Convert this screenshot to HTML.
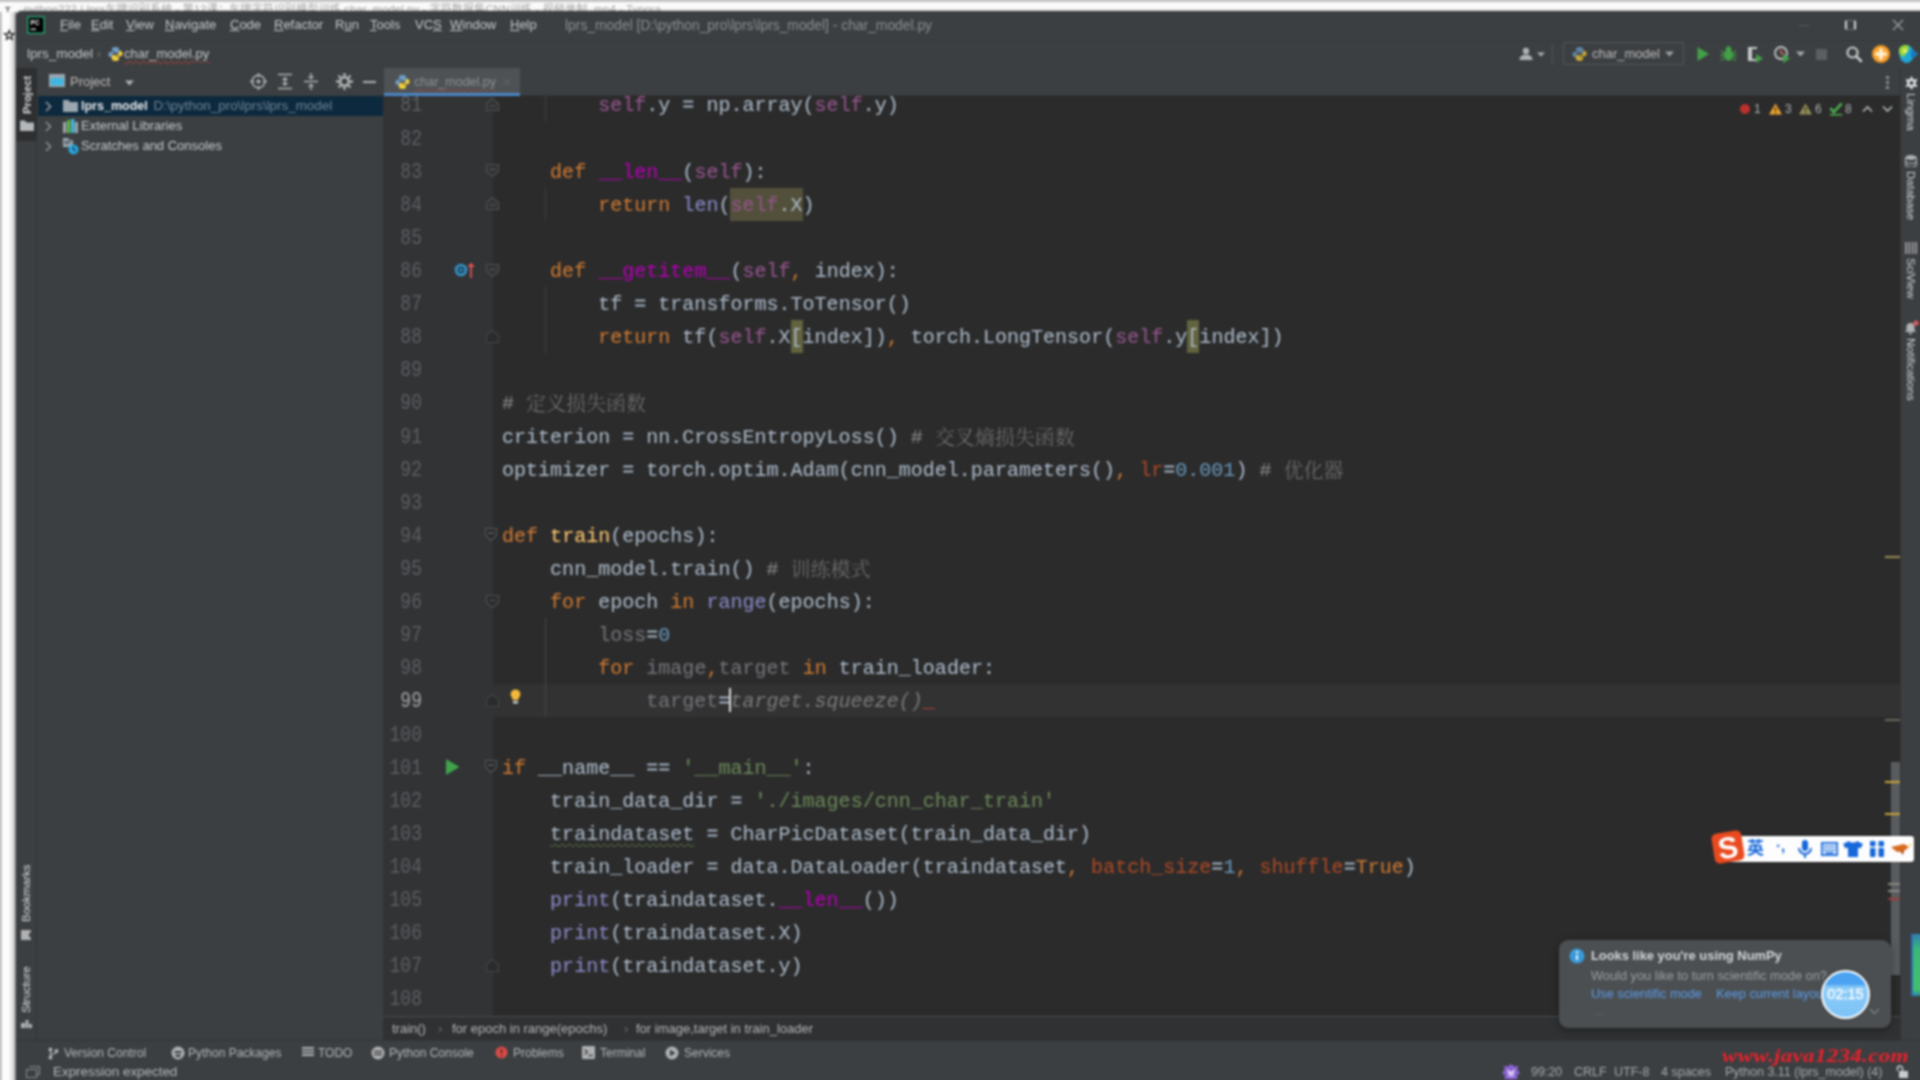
<!DOCTYPE html>
<html lang="en">
<head>
<meta charset="utf-8">
<title>lprs_model - char_model.py</title>
<style>
*{box-sizing:border-box;margin:0;padding:0}
html,body{width:1920px;height:1080px;overflow:hidden}
body{position:relative;background:#f4f4f4;font-family:"Liberation Sans","Noto Sans CJK SC",sans-serif;font-size:13px;color:#bbbbbb}
.abs{position:absolute}
#bgtop{left:0;top:0;width:1920px;height:12px;background:#fafafa;color:#777;font-size:11px;line-height:12px;white-space:nowrap}
#bgtop span{position:absolute;top:2.500px;color:#8a8a8a}
#bgleft{left:0;top:12px;width:17px;height:1092px;background:linear-gradient(90deg,#c4c4c4 0,#c4c4c4 1.500px,#ffffff 2px,#fbfbfb 9px,#d4d4d4 14px,#808284 17px)}
#ide{left:16px;top:11px;width:1928px;height:1093px;background:#3c3f41;border-radius:6px 6px 0 0;overflow:hidden;box-shadow:0 0 3px rgba(0,0,0,.5)}
/* bars */
#menubar{left:0;top:0;width:1904px;height:29px;background:#3c3f41}
#menubar .mi{position:absolute;top:6px;line-height:16px;font-size:13px;color:#c6c8ca;white-space:nowrap}
#menubar .mi u{text-decoration:underline;text-underline-offset:1px}
#navbar{left:0;top:29px;width:1904px;height:28px;background:#3c3f41;border-top:1px solid #373a3c}
#lstripe{left:0;top:57px;width:21px;height:972px;background:#3c3f41;border-right:1px solid #323537}
#rstripe{left:1884px;top:57px;width:20px;height:972px;background:#3c3f41;border-left:1px solid #323537}
#proj{left:21px;top:57px;width:346px;height:972px;background:#3c3f41}
#editor{left:367px;top:57px;width:1517px;height:972px;background:#2b2b2b}
#bottomtools{left:0;top:1029px;width:1904px;height:23px;background:#3c3f41;border-top:1px solid #323537}
#status{left:0;top:1052px;width:1904px;height:17px;background:#3c3f41}

#editor .ln{position:absolute;left:0;width:39px;height:33px;line-height:33px;text-align:right;font-family:"Liberation Mono","DejaVu Sans Mono",monospace;font-size:20px;letter-spacing:.02px;color:#5c5f62;white-space:pre;transform:scale(.9,1.08);transform-origin:100% 50%}
#editor .ln.cur{color:#a4a3a3}
#editor .cl{position:absolute;height:33px;line-height:33px;font-family:"Liberation Mono","Noto Serif CJK SC","DejaVu Sans Mono",monospace;font-size:20px;letter-spacing:.02px;color:#a9b7c6;white-space:pre;-webkit-text-stroke:.1px currentColor}
.k{color:#cc7832}.sf{color:#94558d}.dm{color:#b200b2}.bi{color:#8888c6}.s{color:#6a8759}.n{color:#6897bb}.na{color:#aa4926}.c{color:#808080}.fn{color:#ffc66d}.un{color:#72737a}
.cj{font-family:"Noto Serif CJK SC","Noto Sans CJK SC",serif;font-size:20px;letter-spacing:0;line-height:20px;font-weight:300;color:#757575;-webkit-text-stroke:0;position:relative;top:2px}
.hl{background:#52503a;padding:6px 0 4px}
.hb{background:#62633f;padding:6px 0 4px}
.sg{color:#787878;font-style:italic}
.er{color:#bc3f3c}
.wk{text-decoration:underline wavy #5e7a4a 1px;text-underline-offset:3px}
.caret{display:inline-block;width:2px;height:24px;background:#dddddd;vertical-align:-5px;margin:0 -1px}
.insp{position:absolute;top:33px;font-size:12px;line-height:16px;color:#b0b2b4}
#tabs{left:0;top:0;width:1517px;height:28px;background:#3c3f41;border-bottom:1px solid #323232}
#crumbs{left:0;top:948px;width:1517px;height:24px;background:#2f3133;border-top:1px solid #4a4c4e;font-size:13px;color:#b4b6b8}
#crumbs span{position:absolute;top:4px;line-height:15px;white-space:nowrap}

#bottomtools span{position:absolute;top:4px;font-size:12px;line-height:16px;color:#b4b6b8;white-space:nowrap}
#bottomtools svg{position:absolute}
#status span{position:absolute;top:1px;font-size:12.500px;line-height:16px;color:#a8aaac;white-space:nowrap}
#rstripe span{position:absolute;left:18px;transform:rotate(90deg);transform-origin:0 0;font-size:11.500px;line-height:16px;color:#d2d4d6;white-space:nowrap}

#notif{left:1559px;top:940px;width:332px;height:88px;background:#4b4f51;border-radius:9px;box-shadow:0 2px 8px rgba(0,0,0,.35)}
#notif span{position:absolute;white-space:nowrap;line-height:16px}
#sogou{left:1716px;top:836px;width:198px;height:26px;background:#fdfdfd;border-radius:3px;box-shadow:0 0 2px rgba(0,0,0,.5)}
#wm{left:1722px;top:1041px;font-family:"Liberation Serif","DejaVu Serif",serif;font-weight:700;font-style:italic;font-size:23px;line-height:30px;color:#e8212b;letter-spacing:.3px;white-space:nowrap;transform:scaleY(.82);transform-origin:0 50%}

#blur{position:absolute;left:-24px;top:-24px;width:1968px;height:1128px;background:#fafafa;filter:blur(1px)}
#stage{position:absolute;left:24px;top:24px;width:1920px;height:1080px}
</style>
</head>
<body>
<div id="blur"><div id="stage">
<div id="bgtop" class="abs"><div class="abs" style="left:-24px;top:-24px;width:1968px;height:26px;background:#c4c4c4"></div><span style="left:24px;letter-spacing:.2px;color:#a8a8a8">python222 | lprs车牌识别系统 - 第12课：车牌字符识别模型训练 char_model.py - 字符数据集CNN训练 - 视频录制 .mp4 - Typora</span><span style="left:5px;top:4px;color:#5a5a5a;font-size:9px;font-weight:700">T</span></div>
<div id="bgleft" class="abs"><div class="abs" style="left:-24px;top:0;width:25.500px;height:1092px;background:#c4c4c4"></div><span class="abs" style="left:3px;top:15px;font-family:'DejaVu Sans',sans-serif;font-size:14px;font-weight:700;line-height:16px;color:#000;-webkit-text-stroke:.6px #000">&#9734;</span></div>
<div id="ide" class="abs">
  <div id="menubar" class="abs">
    <svg class="abs" style="left:11px;top:5px" width="18" height="18" viewBox="0 0 18 18"><rect x="0" y="0" width="18" height="18" rx="1" fill="#279a6c"/><rect x="1.600" y="1.600" width="14.800" height="14.800" fill="#000"/><text x="3.4" y="9" font-family="Liberation Sans,sans-serif" font-size="6.5" font-weight="700" fill="#fff">PC</text><rect x="3.6" y="12.6" width="5.4" height="1.2" fill="#fff"/></svg>
    <span class="mi" style="left:44px"><u>F</u>ile</span>
    <span class="mi" style="left:75px"><u>E</u>dit</span>
    <span class="mi" style="left:110px"><u>V</u>iew</span>
    <span class="mi" style="left:149px"><u>N</u>avigate</span>
    <span class="mi" style="left:214px"><u>C</u>ode</span>
    <span class="mi" style="left:258px"><u>R</u>efactor</span>
    <span class="mi" style="left:319px">R<u>u</u>n</span>
    <span class="mi" style="left:354px"><u>T</u>ools</span>
    <span class="mi" style="left:399px">VC<u>S</u></span>
    <span class="mi" style="left:434px"><u>W</u>indow</span>
    <span class="mi" style="left:494px"><u>H</u>elp</span>
    <span class="mi" style="left:549px;color:#8c8f91;font-size:13.85px">lprs_model [D:\python_pro\lprs\lprs_model] - char_model.py</span>
    <div class="abs" style="left:1783px;top:14px;width:10px;height:1px;background:#55585a"></div>
    <div class="abs" style="left:1829px;top:9px;width:11px;height:10px;border:2px solid #d4d6d8;border-top-width:0;border-bottom-width:0"></div>
    <div class="abs" style="left:1829px;top:9px;width:11px;height:10px;border:1px solid #6d7072;border-left:0;border-right:0"></div>
    <svg class="abs" style="left:1876px;top:8px" width="12" height="12" viewBox="0 0 12 12"><path d="M1 1L11 11M11 1L1 11" stroke="#9a9da0" stroke-width="1.4" fill="none"/></svg>
  </div>
  <div id="navbar" class="abs">
    <span class="abs" style="left:11px;top:5px;font-size:13.5px;line-height:16px;color:#c4c6c8">lprs_model</span>
    <span class="abs" style="left:81px;top:5px;font-size:12px;line-height:16px;color:#6f7274">&#8250;</span>
    <svg class="abs pyi" style="left:92px;top:5px" width="15" height="16" viewBox="0 0 15 16"><path d="M7 1C4.6 1 4 2 4 3.2V5h3.5v.8H2.4C1.2 5.800 .5 6.800 .5 8.500S1.200 11 2.400 11H4V9.200C4 8 5 7 6.200 7H9.800C10.700 7 11.200 6.400 11.200 5.500V3.200C11.200 1.900 10 1 7 1Z" fill="#6f9fc9"/><path d="M8 15c2.400 0 3-1 3-2.200V11H7.500v-.8h5.100c1.200 0 1.900-1 1.900-2.700S13.800 5 12.600 5H11v1.800C11 8 10 9 8.800 9H5.200C4.300 9 3.800 9.600 3.800 10.500v2.300C3.800 14.100 5 15 8 15Z" fill="#f2d13c"/></svg>
    <span class="abs" style="left:108px;top:5px;font-size:13px;line-height:16px;color:#c4c6c8;text-decoration:underline wavy #bc3f3c 1px;text-underline-offset:2px">char_model.py</span>
    <!-- right toolbar -->
    <svg class="abs" style="left:1502px;top:5px" width="32" height="16" viewBox="0 0 32 16"><circle cx="8" cy="5" r="3.200" fill="#afb1b3"/><path d="M1.500 14c0-3.600 2.600-5.200 6.500-5.200s6.500 1.600 6.500 5.200z" fill="#afb1b3"/><path d="M19 6.500h8l-4 4z" fill="#afb1b3"/></svg>
    <div class="abs" style="left:1536px;top:3px;width:1px;height:21px;background:#515456"></div>
    <div class="abs" style="left:1547px;top:1px;width:121px;height:23px;border:1px solid #55585a;border-radius:2px"></div>
    <svg class="abs" style="left:1556px;top:5px" width="15" height="16" viewBox="0 0 15 16"><path d="M7 1C4.6 1 4 2 4 3.2V5h3.5v.8H2.4C1.2 5.800 .5 6.800 .5 8.500S1.200 11 2.400 11H4V9.200C4 8 5 7 6.200 7H9.800C10.700 7 11.200 6.400 11.200 5.500V3.200C11.200 1.900 10 1 7 1Z" fill="#5f86a8"/><path d="M8 15c2.400 0 3-1 3-2.200V11H7.500v-.8h5.100c1.200 0 1.900-1 1.900-2.700S13.800 5 12.600 5H11v1.800C11 8 10 9 8.800 9H5.200C4.300 9 3.800 9.600 3.800 10.500v2.300C3.800 14.100 5 15 8 15Z" fill="#c9a936"/></svg>
    <span class="abs" style="left:1576px;top:5px;font-size:13px;line-height:16px;color:#bbbbbb">char_model</span>
    <svg class="abs" style="left:1649px;top:10px" width="9" height="6" viewBox="0 0 9 6"><path d="M0 .5h9L4.500 5.500z" fill="#9da0a2"/></svg>
    <svg class="abs" style="left:1680px;top:5px" width="14" height="16" viewBox="0 0 14 16"><path d="M1.500 1L13 8 1.500 15z" fill="#43a047"/></svg>
    <svg class="abs" style="left:1704px;top:4px" width="17" height="18" viewBox="0 0 17 18"><ellipse cx="8.500" cy="10" rx="4.600" ry="5.800" fill="#43a047"/><circle cx="8.500" cy="4" r="2.800" fill="#43a047"/><path d="M1 6l3 2M16 6l-3 2M.5 10.500H4M16.500 10.500H13M1 15.500l3-2M16 15.500l-3-2" stroke="#43a047" stroke-width="1.500" fill="none"/></svg>
    <svg class="abs" style="left:1730px;top:4px" width="18" height="18" viewBox="0 0 18 18"><path d="M2 2h9v14H2z" fill="#c7c9cb"/><path d="M5 4h6v10H5z" fill="#3c3f41"/><path d="M2 2h4v14H2z" fill="#c7c9cb"/><path d="M10 9l7 4.500L10 18z" fill="#43a047"/></svg>
    <svg class="abs" style="left:1757px;top:4px" width="18" height="18" viewBox="0 0 18 18"><circle cx="8" cy="8" r="6" fill="none" stroke="#c0c2c4" stroke-width="1.800"/><path d="M8 4.500V8l3 1.500" stroke="#d0605c" stroke-width="1.500" fill="none"/><path d="M10 9l7 4.500L10 18z" fill="#43a047"/></svg>
    <svg class="abs" style="left:1780px;top:10px" width="9" height="6" viewBox="0 0 9 6"><path d="M0 .5h9L4.500 5.500z" fill="#a6a8aa"/></svg>
    <div class="abs" style="left:1800px;top:8px;width:11px;height:11px;background:#5c5f61"></div>
    <svg class="abs" style="left:1829px;top:4px" width="18" height="18" viewBox="0 0 18 18"><circle cx="7.500" cy="7.500" r="5" fill="none" stroke="#c9cbcd" stroke-width="2.200"/><path d="M11.300 11.300L16 16" stroke="#c9cbcd" stroke-width="2.600" stroke-linecap="round"/></svg>
    <svg class="abs" style="left:1855px;top:3px" width="20" height="20" viewBox="0 0 20 20"><circle cx="10" cy="10" r="9" fill="#f59a23"/><circle cx="10" cy="10" r="6.500" fill="#f7ae45"/><path d="M10 5.500v9M5.500 10h9" stroke="#fff4dc" stroke-width="3" stroke-linecap="round"/></svg>
    <svg class="abs" style="left:1881px;top:3px" width="22" height="20" viewBox="0 0 22 20"><path d="M2 7c0-4 3.500-6 7-6s6 2 7 5l5 4-5 4c-1 3-4 5-7 5-4-1-7-4-7-12z" fill="#1ea6d8"/><path d="M2 7c0-4 3.500-6 7-6 2 0 3 1 3 3 0 4-4 5-5 9-3-1-5-3-5-6z" fill="#9ad535"/><path d="M14 6l7 4-7 4z" fill="#1775c9"/><circle cx="8" cy="7" r="2.200" fill="#e4f26a"/></svg>
  </div>
  <div id="lstripe" class="abs">
    <div class="abs" style="left:0;top:0;width:21px;height:73px;background:#2d2f30"></div>
    <span class="abs vtxt" style="left:2.500px;top:46px;transform:rotate(-90deg);transform-origin:0 0;width:40px;font-size:11.300px;line-height:16px;color:#d5d7d9;font-weight:700;white-space:nowrap">Project</span>
    <svg class="abs" style="left:4px;top:51px" width="14" height="12" viewBox="0 0 14 12"><path d="M0 1.500h5l1.500 2H14V12H0z" fill="#b4b8bb"/></svg>
    <span class="abs vtxt" style="left:2px;top:854px;transform:rotate(-90deg);transform-origin:0 0;width:70px;font-size:11.500px;line-height:16px;color:#dcdee0;white-space:nowrap">Bookmarks</span>
    <svg class="abs" style="left:5px;top:861px" width="10" height="12" viewBox="0 0 10 12"><path d="M0 0h10v12L5 8.500 0 12z" fill="#afb1b3" transform="rotate(-90 5 6)"/></svg>
    <span class="abs vtxt" style="left:2px;top:945px;transform:rotate(-90deg);transform-origin:0 0;width:60px;font-size:11.500px;line-height:16px;color:#dcdee0;white-space:nowrap">Structure</span>
    <svg class="abs" style="left:5px;top:949px" width="11" height="11" viewBox="0 0 11 11"><path d="M0 6h4v5H0zM4.500 3h3v8h-3zM8 7h3v4H8z" fill="#afb1b3"/></svg>
  </div>
  <div id="proj" class="abs">
    <!-- header -->
    <svg class="abs" style="left:12px;top:6px" width="16" height="15" viewBox="0 0 16 15"><rect x="0" y="0" width="16" height="13" fill="#9aa7b0"/><rect x="1.500" y="4" width="13" height="7.500" fill="#40b6e0"/><rect x="0" y="13" width="16" height="2" fill="#3c3f41"/></svg>
    <span class="abs" style="left:33px;top:6px;font-size:13px;line-height:16px;color:#bbbbbb">Project</span>
    <svg class="abs" style="left:88px;top:12px" width="9" height="6" viewBox="0 0 9 6"><path d="M0 .5h9L4.500 5.500z" fill="#afb1b3"/></svg>
    <svg class="abs" style="left:213px;top:5px" width="17" height="17" viewBox="0 0 17 17"><circle cx="8.500" cy="8.500" r="6.300" fill="none" stroke="#afb1b3" stroke-width="1.600"/><circle cx="8.500" cy="8.500" r="2" fill="#afb1b3"/><path d="M8.500 0v4M8.500 13v4M0 8.500h4M13 8.500h4" stroke="#afb1b3" stroke-width="1.600"/></svg>
    <svg class="abs" style="left:240px;top:5px" width="16" height="17" viewBox="0 0 16 17"><path d="M1 1.500h14M1 15.500h14" stroke="#afb1b3" stroke-width="1.700"/><path d="M8 4l3.500 3h-7zM8 13l3.500-3h-7z" fill="#afb1b3"/><path d="M8 6v5" stroke="#afb1b3" stroke-width="1.500"/></svg>
    <svg class="abs" style="left:266px;top:5px" width="16" height="17" viewBox="0 0 16 17"><path d="M1 8.500h14" stroke="#afb1b3" stroke-width="1.700"/><path d="M8 6.500l3.500-3h-7zM8 10.500l3.500 3h-7z" fill="#afb1b3"/><path d="M8 0v4M8 13v4" stroke="#afb1b3" stroke-width="1.500"/></svg>
    <svg class="abs" style="left:299px;top:5px" width="17" height="17" viewBox="0 0 17 17"><circle cx="8.500" cy="8.500" r="4.200" fill="none" stroke="#afb1b3" stroke-width="2.600"/><path d="M8.500 0v3.500M8.500 13.500V17M0 8.500h3.500M13.500 8.500H17M2.500 2.500l2.500 2.500M12 12l2.500 2.500M14.500 2.500L12 5M5 12l-2.500 2.500" stroke="#afb1b3" stroke-width="2.300"/></svg>
    <div class="abs" style="left:326px;top:13px;width:13px;height:2px;background:#afb1b3"></div>
    <!-- tree -->
    <div class="abs" style="left:1px;top:28px;width:345px;height:20px;background:#0d293e"></div>
    <svg class="abs chev" style="left:8px;top:33px" width="7" height="11" viewBox="0 0 7 11"><path d="M1 1l4.500 4.500L1 10" stroke="#9da0a2" stroke-width="1.500" fill="none"/></svg>
    <svg class="abs" style="left:26px;top:32px" width="15" height="12" viewBox="0 0 15 12"><path d="M0 0h5.500l1.500 2H15v10H0z" fill="#9aa7b0"/></svg>
    <span class="abs" style="left:44px;top:30px;font-size:12.500px;line-height:16px;color:#e8eaec;font-weight:700;white-space:nowrap">lprs_model</span>
    <span class="abs" style="left:116.500px;top:30px;font-size:13.400px;line-height:16px;color:#6f8496;white-space:nowrap">D:\python_pro\lprs\lprs_model</span>
    <svg class="abs chev" style="left:8px;top:53px" width="7" height="11" viewBox="0 0 7 11"><path d="M1 1l4.500 4.500L1 10" stroke="#8f9294" stroke-width="1.500" fill="none"/></svg>
    <svg class="abs" style="left:26px;top:51px" width="15" height="14" viewBox="0 0 15 14"><rect x="0" y="3" width="3.300" height="11" fill="#9aa7b0"/><rect x="4" y="1" width="3.300" height="13" fill="#62b543"/><rect x="8" y="0" width="3.300" height="14" fill="#40b6e0"/><rect x="11.700" y="3" width="3.300" height="11" fill="#9aa7b0"/></svg>
    <span class="abs" style="left:44px;top:50px;font-size:13px;line-height:16px;color:#c8cacc;white-space:nowrap">External Libraries</span>
    <svg class="abs chev" style="left:8px;top:73px" width="7" height="11" viewBox="0 0 7 11"><path d="M1 1l4.500 4.500L1 10" stroke="#8f9294" stroke-width="1.500" fill="none"/></svg>
    <svg class="abs" style="left:26px;top:70px" width="17" height="17" viewBox="0 0 17 17"><path d="M0 0h5l1.500 2H10V9H0z" fill="#9aa7b0"/><path d="M1.500 3.500h7M1.500 5.500h5" stroke="#3c3f41" stroke-width="1"/><circle cx="10.500" cy="11.500" r="5" fill="#27a6dc"/><path d="M10.500 8.500v3l2.200 1.600" stroke="#203040" stroke-width="1.200" fill="none"/></svg>
    <span class="abs" style="left:44px;top:70px;font-size:13px;line-height:16px;color:#c8cacc;white-space:nowrap">Scratches and Consoles</span>
  </div>
  <div id="editor" class="abs">
    <div class="abs" style="left:0;top:0;width:110px;height:948px;background:#313335"></div>
    <div class="abs" style="left:110px;top:616.4px;width:1407px;height:33px;background:#323232"></div>
    <div class="abs" style="left:162.1px;top:20.4px;width:1px;height:33.1px;background:#3e4042"></div>
    <div class="abs" style="left:162.1px;top:119.8px;width:1px;height:33.1px;background:#3e4042"></div>
    <div class="abs" style="left:162.1px;top:219.1px;width:1px;height:66.2px;background:#3e4042"></div>
    <div class="abs" style="left:162.1px;top:550.2px;width:1px;height:99.3px;background:#454749"></div>
    <div class="ln" style="top:21.4px">81</div>
    <div class="cl" style="left:215.2px;top:21.4px"><span class="sf">self</span>.y = np.array(<span class="sf">self</span>.y)</div>
    <div class="ln" style="top:54.6px">82</div>
    <div class="ln" style="top:87.7px">83</div>
    <div class="cl" style="left:167.1px;top:87.7px"><span class="k">def</span> <span class="dm">__len__</span>(<span class="sf">self</span>):</div>
    <div class="ln" style="top:120.8px">84</div>
    <div class="cl" style="left:215.2px;top:120.8px"><span class="k">return</span> <span class="bi">len</span>(<span class="hl"><span class="sf">self</span>.X</span>)</div>
    <div class="ln" style="top:153.9px">85</div>
    <div class="ln" style="top:187.0px">86</div>
    <div class="cl" style="left:167.1px;top:187.0px"><span class="k">def</span> <span class="dm">__getitem__</span>(<span class="sf">self</span><span class="k">,</span> index):</div>
    <div class="ln" style="top:220.1px">87</div>
    <div class="cl" style="left:215.2px;top:220.1px">tf = transforms.ToTensor()</div>
    <div class="ln" style="top:253.2px">88</div>
    <div class="cl" style="left:215.2px;top:253.2px"><span class="k">return</span> tf(<span class="sf">self</span>.X<span class="hb">[</span>index])<span class="k">,</span> torch.LongTensor(<span class="sf">self</span>.y<span class="hb">[</span>index])</div>
    <div class="ln" style="top:286.3px">89</div>
    <div class="ln" style="top:319.4px">90</div>
    <div class="cl" style="left:119.0px;top:319.4px"><span class="c"># <span class="cj">定义损失函数</span></span></div>
    <div class="ln" style="top:352.5px">91</div>
    <div class="cl" style="left:119.0px;top:352.5px">criterion = nn.CrossEntropyLoss() <span class="c"># <span class="cj">交叉熵损失函数</span></span></div>
    <div class="ln" style="top:385.7px">92</div>
    <div class="cl" style="left:119.0px;top:385.7px">optimizer = torch.optim.Adam(cnn_model.parameters()<span class="k">,</span> <span class="na">lr</span>=<span class="n">0.001</span>) <span class="c"># <span class="cj">优化器</span></span></div>
    <div class="ln" style="top:418.8px">93</div>
    <div class="ln" style="top:451.9px">94</div>
    <div class="cl" style="left:119.0px;top:451.9px"><span class="k">def</span> <span class="fn">train</span>(epochs):</div>
    <div class="ln" style="top:485.0px">95</div>
    <div class="cl" style="left:167.1px;top:485.0px">cnn_model.train() <span class="c"># <span class="cj">训练模式</span></span></div>
    <div class="ln" style="top:518.1px">96</div>
    <div class="cl" style="left:167.1px;top:518.1px"><span class="k">for</span> epoch <span class="k">in</span> <span class="bi">range</span>(epochs):</div>
    <div class="ln" style="top:551.2px">97</div>
    <div class="cl" style="left:215.2px;top:551.2px"><span class="un">loss</span>=<span class="n">0</span></div>
    <div class="ln" style="top:584.3px">98</div>
    <div class="cl" style="left:215.2px;top:584.3px"><span class="k">for</span> <span class="un">image</span><span class="k">,</span><span class="un">target</span> <span class="k">in</span> train_loader:</div>
    <div class="ln cur" style="top:617.4px">99</div>
    <div class="cl" style="left:263.2px;top:617.4px"><span class="un">target</span>=<span class="caret"></span><span class="sg">target.squeeze()</span><span class="er">_</span></div>
    <div class="ln" style="top:650.5px">100</div>
    <div class="ln" style="top:683.6px">101</div>
    <div class="cl" style="left:119.0px;top:683.6px"><span class="k">if</span> __name__ == <span class="s">'__main__'</span>:</div>
    <div class="ln" style="top:716.8px">102</div>
    <div class="cl" style="left:167.1px;top:716.8px">train_data_dir = <span class="s">'./images/cnn_char_train'</span></div>
    <div class="ln" style="top:749.9px">103</div>
    <div class="cl" style="left:167.1px;top:749.9px"><span class="wk">traindataset</span> = CharPicDataset(train_data_dir)</div>
    <div class="ln" style="top:783.0px">104</div>
    <div class="cl" style="left:167.1px;top:783.0px">train_loader = data.DataLoader(traindataset<span class="k">,</span> <span class="na">batch_size</span>=<span class="n">1</span><span class="k">,</span> <span class="na">shuffle</span>=<span class="k">True</span>)</div>
    <div class="ln" style="top:816.1px">105</div>
    <div class="cl" style="left:167.1px;top:816.1px"><span class="bi">print</span>(traindataset.<span class="dm">__len__</span>())</div>
    <div class="ln" style="top:849.2px">106</div>
    <div class="cl" style="left:167.1px;top:849.2px"><span class="bi">print</span>(traindataset.X)</div>
    <div class="ln" style="top:882.3px">107</div>
    <div class="cl" style="left:167.1px;top:882.3px"><span class="bi">print</span>(traindataset.y)</div>
    <div class="ln" style="top:915.4px">108</div>
    <svg class="abs" style="left:102px;top:29.0px" width="15" height="15" viewBox="0 0 15 15"><path d="M1.500 13.500h12v-7l-6-5-6 5z" fill="#313335" stroke="#4d5052" stroke-width="1.200"/><path d="M4.500 9h6" stroke="#5a5d5f" stroke-width="1.200"/></svg>
    <svg class="abs" style="left:102px;top:95.2px" width="15" height="15" viewBox="0 0 15 15"><path d="M1.500 1.500h12v7l-6 5-6-5z" fill="#313335" stroke="#4d5052" stroke-width="1.200"/><path d="M4.500 6.500h6" stroke="#5a5d5f" stroke-width="1.200"/></svg>
    <svg class="abs" style="left:102px;top:128.3px" width="15" height="15" viewBox="0 0 15 15"><path d="M1.500 13.500h12v-7l-6-5-6 5z" fill="#313335" stroke="#4d5052" stroke-width="1.200"/><path d="M4.500 9h6" stroke="#5a5d5f" stroke-width="1.200"/></svg>
    <svg class="abs" style="left:102px;top:194.6px" width="15" height="15" viewBox="0 0 15 15"><path d="M1.500 1.500h12v7l-6 5-6-5z" fill="#313335" stroke="#4d5052" stroke-width="1.200"/><path d="M4.500 6.500h6" stroke="#5a5d5f" stroke-width="1.200"/></svg>
    <svg class="abs" style="left:102px;top:260.8px" width="15" height="15" viewBox="0 0 15 15"><path d="M1.500 13.500h12v-7l-6-5-6 5z" fill="#2b2b2b" stroke="#434547" stroke-width="1.200"/></svg>
    <svg class="abs" style="left:102px;top:525.6px" width="15" height="15" viewBox="0 0 15 15"><path d="M1.500 1.500h12v7l-6 5-6-5z" fill="#2b2b2b" stroke="#4d5052" stroke-width="1.200"/><path d="M4.500 6.500h6" stroke="#5a5d5f" stroke-width="1.200"/></svg>
    <svg class="abs" style="left:102px;top:625.0px" width="15" height="15" viewBox="0 0 15 15"><path d="M1.500 13.500h12v-7l-6-5-6 5z" fill="#2b2b2b" stroke="#434547" stroke-width="1.200"/></svg>
    <svg class="abs" style="left:102px;top:889.9px" width="15" height="15" viewBox="0 0 15 15"><path d="M1.500 13.500h12v-7l-6-5-6 5z" fill="#2b2b2b" stroke="#434547" stroke-width="1.200"/></svg>
    <svg class="abs" style="left:101px;top:459.4px" width="14" height="15" viewBox="0 0 14 15"><path d="M1.500 1.500h11v7l-5.500 5-5.500-5z" fill="#2b2b2b" stroke="#55585a" stroke-width="1.100"/><path d="M4 6h6" stroke="#7a7d7f" stroke-width="1.200"/></svg>
    <svg class="abs" style="left:101px;top:691.2px" width="14" height="15" viewBox="0 0 14 15"><path d="M1.500 1.500h11v7l-5.500 5-5.500-5z" fill="#2b2b2b" stroke="#55585a" stroke-width="1.100"/><path d="M4 6h6" stroke="#7a7d7f" stroke-width="1.200"/></svg>
    <svg class="abs" style="left:70px;top:192.6px" width="22" height="20" viewBox="0 0 22 20"><circle cx="8" cy="9" r="6.300" fill="#3592c4"/><circle cx="8" cy="9" r="2.600" fill="none" stroke="#1e3a4c" stroke-width="1.600"/><path d="M18 17V3" stroke="#e05555" stroke-width="1.800"/><path d="M14.500 6L18 1.500 21.500 6z" fill="#e05555"/></svg>
    <svg class="abs" style="left:62px;top:690.2px" width="15" height="18" viewBox="0 0 15 18"><path d="M1 1l13.500 8L1 17z" fill="#3fa34a"/></svg>
    <svg class="abs" style="left:127px;top:621.0px" width="11" height="15" viewBox="0 0 11 15"><path d="M5.500 .5a4.800 4.800 0 0 1 3 8.600V11h-6V9.100a4.800 4.800 0 0 1 3-8.600z" fill="#f2b83a"/><rect x="3" y="12" width="5" height="2.500" fill="#c9cbcd"/></svg>
    <div class="abs" style="left:1357px;top:36px;width:10px;height:10px;border-radius:5px;background:#bb302e"></div>
    <span class="insp" style="left:1371px">1</span>
    <svg class="abs" style="left:1386px;top:35px" width="13" height="12" viewBox="0 0 15 14"><path d="M7.500 .5L15 13.500H0z" fill="#f0a732"/><path d="M7.500 5v4.500M7.500 10.800v1.500" stroke="#4a3510" stroke-width="1.900"/></svg>
    <span class="insp" style="left:1402px">3</span>
    <svg class="abs" style="left:1416px;top:35px" width="13" height="12" viewBox="0 0 15 14"><path d="M7.500 .5L15 13.500H0z" fill="#96925a"/><path d="M7.500 5v4.500M7.500 10.800v1.500" stroke="#3a3820" stroke-width="1.900"/></svg>
    <span class="insp" style="left:1432px">6</span>
    <svg class="abs" style="left:1446px;top:34px" width="14" height="14" viewBox="0 0 16 16"><path d="M1.500 7l4 4.500L14.500 1.500" stroke="#4caf50" stroke-width="3" fill="none"/><path d="M1 14.500h14" stroke="#4caf50" stroke-width="1.800"/></svg>
    <span class="insp" style="left:1462px">8</span>
    <svg class="abs" style="left:1479px;top:37px" width="11" height="8" viewBox="0 0 11 8"><path d="M1 6.500L5.500 2 10 6.500" stroke="#b8babc" stroke-width="1.700" fill="none"/></svg>
    <svg class="abs" style="left:1499px;top:37px" width="11" height="8" viewBox="0 0 11 8"><path d="M1 1.500L5.500 6 10 1.500" stroke="#b8babc" stroke-width="1.700" fill="none"/></svg>
    <div class="abs" style="left:1508px;top:694px;width:9px;height:213px;background:#595c5e"></div>
    <div class="abs" style="left:1502px;top:488px;width:15px;height:2px;background:#9d8a55"></div>
    <div class="abs" style="left:1502px;top:651px;width:15px;height:2px;background:#6b6b62"></div>
    <div class="abs" style="left:1502px;top:713px;width:15px;height:2px;background:#c9a63c"></div>
    <div class="abs" style="left:1502px;top:745px;width:15px;height:2px;background:#c9a63c"></div>
    <div class="abs" style="left:1505px;top:815px;width:12px;height:2px;background:#8b8b86"></div>
    <div class="abs" style="left:1505px;top:822px;width:12px;height:2px;background:#8b8b86"></div>
    <div class="abs" style="left:1505px;top:830px;width:12px;height:2px;background:#9c3b3b"></div>
    <div id="tabs" class="abs">
      <div class="abs" style="left:1px;top:0;width:136px;height:28px;background:#4e5254"></div>
      <div class="abs" style="left:1px;top:25px;width:136px;height:3px;background:#4a88c7"></div>
      <svg class="abs" style="left:12px;top:6px" width="15" height="16" viewBox="0 0 15 16"><path d="M7 1C4.6 1 4 2 4 3.2V5h3.5v.8H2.4C1.2 5.800 .5 6.800 .5 8.500S1.200 11 2.400 11H4V9.200C4 8 5 7 6.200 7H9.800C10.700 7 11.200 6.400 11.200 5.500V3.200C11.200 1.900 10 1 7 1Z" fill="#6f9fc9"/><path d="M8 15c2.400 0 3-1 3-2.200V11H7.500v-.8h5.100c1.200 0 1.900-1 1.900-2.700S13.800 5 12.600 5H11v1.800C11 8 10 9 8.800 9H5.200C4.300 9 3.800 9.600 3.800 10.500v2.300C3.800 14.100 5 15 8 15Z" fill="#f2d13c"/></svg>
      <span class="abs" style="left:31px;top:6px;font-size:12.500px;line-height:16px;color:#8e9193;white-space:nowrap;text-decoration:underline wavy #9c4a46 1px;text-underline-offset:2px">char_model.py</span>
      <svg class="abs" style="left:120px;top:10px" width="8" height="8" viewBox="0 0 8 8"><path d="M1 1l6 6M7 1L1 7" stroke="#5f6264" stroke-width="1.100"/></svg>
      <div class="abs" style="left:1503px;top:8px;width:3px;height:3px;background:#8a8d8f;box-shadow:0 5px 0 #8a8d8f,0 10px 0 #8a8d8f"></div>
    </div>
    <div id="crumbs" class="abs">
      <span style="left:9px">train()</span>
      <span style="left:55px;color:#6e7173">&#8250;</span>
      <span style="left:69px">for epoch in range(epochs)</span>
      <span style="left:241px;color:#6e7173">&#8250;</span>
      <span style="left:253px">for image,target in train_loader</span>
    </div>
  </div>
  <div id="rstripe" class="abs">
    <svg class="abs" style="left:4px;top:8px" width="13" height="14" viewBox="0 0 13 14"><path d="M6.500 0l2 3.500 4-.5-2 4 2 4-4-.5-2 3.500-2-3.500-4 .5 2-4-2-4 4 .5z" fill="#dfe1e3"/><circle cx="6.500" cy="7" r="2" fill="#3c3f41"/></svg>
    <span style="top:25px">Lingma</span>
    <svg class="abs" style="left:4px;top:87px" width="12" height="12" viewBox="0 0 12 12"><ellipse cx="6" cy="2.500" rx="5.500" ry="2.500" fill="#afb1b3"/><path d="M.5 2.500v7c0 1.400 2.500 2.500 5.500 2.500s5.500-1.100 5.500-2.500v-7" fill="none" stroke="#afb1b3" stroke-width="1.200"/><path d="M.5 6c0 1.400 2.500 2.500 5.500 2.500S11.500 7.400 11.500 6" fill="none" stroke="#afb1b3" stroke-width="1.200"/></svg>
    <span style="top:103px">Database</span>
    <svg class="abs" style="left:4px;top:174px" width="12" height="12" viewBox="0 0 12 12"><path d="M1 0v12M4.300 0v12M7.700 0v12M11 0v12" stroke="#afb1b3" stroke-width="1.500"/></svg>
    <span style="top:190px">SciView</span>
    <svg class="abs" style="left:3px;top:252px" width="15" height="15" viewBox="0 0 15 15"><path d="M6.500 3a4 4 0 0 1 4 4v3l1.500 2H1l1.500-2V7a4 4 0 0 1 4-4z" fill="#afb1b3"/><rect x="5" y="12.500" width="3" height="1.800" fill="#afb1b3"/><circle cx="12" cy="3" r="2.600" fill="#db5860"/></svg>
    <span style="top:270px">Notifications</span>
  </div>
  <div id="bottomtools" class="abs">
    <svg style="left:32px;top:6px" width="11" height="13" viewBox="0 0 11 13"><circle cx="2.500" cy="2.500" r="2" fill="#afb1b3"/><circle cx="2.500" cy="10.500" r="2" fill="#afb1b3"/><circle cx="8.500" cy="4" r="2" fill="#afb1b3"/><path d="M2.500 2v9M2.500 8.500c0-2 6-1 6-4" stroke="#afb1b3" stroke-width="1.300" fill="none"/></svg>
    <span style="left:48px">Version Control</span>
    <svg style="left:155px;top:5px" width="14" height="14" viewBox="0 0 14 14"><circle cx="7" cy="7" r="6.500" fill="#afb1b3"/><path d="M3.500 5h7v2h-7zM4.500 8.500h5V11h-5z" fill="#3c3f41"/></svg>
    <span style="left:172px">Python Packages</span>
    <svg style="left:286px;top:6px" width="12" height="11" viewBox="0 0 12 11"><path d="M0 1h12M0 4.500h12M0 8h12" stroke="#afb1b3" stroke-width="2"/></svg>
    <span style="left:302px">TODO</span>
    <svg style="left:355px;top:5px" width="14" height="14" viewBox="0 0 14 14"><circle cx="7" cy="7" r="6.500" fill="#afb1b3"/><path d="M3 5.500h8M3 8.500h8" stroke="#3c3f41" stroke-width="1.300"/></svg>
    <span style="left:373px">Python Console</span>
    <svg style="left:479px;top:5px" width="13" height="13" viewBox="0 0 13 13"><circle cx="6.500" cy="6.500" r="6" fill="#d64d4a"/><path d="M6.500 3v4.500M6.500 9v1.500" stroke="#5b1c1a" stroke-width="1.500"/></svg>
    <span style="left:497px">Problems</span>
    <svg style="left:566px;top:5px" width="13" height="13" viewBox="0 0 13 13"><rect x="0" y="0" width="13" height="13" rx="1" fill="#afb1b3"/><path d="M2.500 3.500l3 2.500-3 2.500M6.500 9.500h4" stroke="#3c3f41" stroke-width="1.300" fill="none"/></svg>
    <span style="left:584px">Terminal</span>
    <svg style="left:649px;top:5px" width="14" height="14" viewBox="0 0 14 14"><circle cx="7" cy="7" r="6.500" fill="#afb1b3"/><path d="M5 3.800L10.500 7 5 10.200z" fill="#3c3f41"/></svg>
    <span style="left:668px">Services</span>
  </div>
  <div id="status" class="abs">
    <svg class="abs" style="left:10px;top:3px" width="14" height="12" viewBox="0 0 14 12"><path d="M3.500 .5h10v8h-3M.5 3.500h10v8H.5z" fill="none" stroke="#8a8d8f" stroke-width="1.100"/></svg>
    <span style="left:37px;font-size:13.400px;color:#b6b8ba">Expression expected</span>
    <svg class="abs" style="left:1486px;top:1px" width="18" height="16" viewBox="0 0 18 16"><path d="M9 0l3 2.500 4-.5-.5 4L18 9l-3 2.500.5 4-4-.5L9 16l-2.500-1-4 .5.500-4L0 9l2.500-3L2 2l4 .5z" fill="#8a63d2"/><path d="M5 5l4 3 4-3-1.500 5h-5z" fill="#e8defa"/><path d="M6 11.500h6" stroke="#e8defa" stroke-width="1.500"/></svg>
    <span style="left:1515px">99:20</span>
    <span style="left:1558px">CRLF</span>
    <span style="left:1598px">UTF-8</span>
    <span style="left:1645px">4 spaces</span>
    <span style="left:1709px">Python 3.11 (lprs_model) (4)</span>
    <svg class="abs" style="left:1880px;top:2px" width="13" height="13" viewBox="0 0 13 13"><rect x="3" y="6" width="9" height="7" fill="#c9cbcd"/><path d="M1.500 6V3.500a2.500 2.500 0 0 1 5 0V6" stroke="#c9cbcd" stroke-width="1.500" fill="none"/></svg>
  </div>
</div>
<div id="notif" class="abs">
  <svg class="abs" style="left:10px;top:8px" width="16" height="16" viewBox="0 0 16 16"><circle cx="8" cy="8" r="7.500" fill="#3a9ad9"/><path d="M8 7v5" stroke="#eaf4fb" stroke-width="2"/><circle cx="8" cy="4.300" r="1.200" fill="#eaf4fb"/></svg>
  <span style="left:32px;top:8px;font-size:12.900px;font-weight:700;color:#d4d6d8">Looks like you're using NumPy</span>
  <span style="left:32px;top:28px;font-size:12.800px;color:#9d9fa1">Would you like to turn scientific mode on?</span>
  <span style="left:32px;top:46px;font-size:12.800px;color:#5b9bea">Use scientific mode</span>
  <span style="left:157px;top:46px;font-size:12.800px;color:#5b9bea">Keep current layout...</span>
  <span style="left:36px;top:63px;font-size:11px;color:#77797b">...</span>
  <svg class="abs" style="left:310px;top:68px" width="11" height="7" viewBox="0 0 11 7"><path d="M1 1l4.500 4.500L10 1" stroke="#7d8082" stroke-width="1.400" fill="none"/></svg>
</div>
<div id="timer" class="abs" style="left:1821px;top:970px;width:49px;height:49px;border-radius:50%;background:linear-gradient(180deg,#4aa2f1 0,#4aa2f1 26%,#8ccbf7 34%,#7cc3f6 100%);border:2.500px solid #ffffff;box-shadow:0 0 3px rgba(0,0,0,.3);color:#ffffff;font-size:14.500px;line-height:44px;text-align:center;font-weight:400;-webkit-text-stroke:.3px #fff">02:15</div>
<div id="sogou" class="abs">
  <span class="abs" style="left:31px;top:3px;font-family:'Liberation Sans','Noto Sans CJK SC',sans-serif;font-weight:700;font-size:17px;line-height:20px;color:#1667d9">英</span>
  <span class="abs" style="left:60px;top:0px;font-weight:700;font-size:15px;line-height:20px;color:#1667d9">&#183;,</span>
  <svg class="abs" style="left:82px;top:4px" width="14" height="19" viewBox="0 0 14 19"><rect x="4" y="0" width="6" height="11" rx="3" fill="#1667d9"/><path d="M1 8a6 6 0 0 0 12 0M7 14v4" stroke="#1667d9" stroke-width="2" fill="none"/></svg>
  <svg class="abs" style="left:105px;top:6px" width="17" height="14" viewBox="0 0 17 14"><rect x=".8" y=".8" width="15.400" height="12.400" fill="#dbe9fb" stroke="#1667d9" stroke-width="1.800"/><path d="M3 4.500h11M3 8h11" stroke="#1667d9" stroke-width="1.600" stroke-dasharray="2 1.200"/><path d="M4.500 11h8" stroke="#1667d9" stroke-width="1.600"/></svg>
  <svg class="abs" style="left:127px;top:5px" width="20" height="16" viewBox="0 0 20 16"><path d="M6 0c1 2 7 2 8 0l6 3-2.500 4.500L15 6.500V16H5V6.500L2.500 7.500 0 3z" fill="#1667d9"/></svg>
  <svg class="abs" style="left:153px;top:5px" width="16" height="16" viewBox="0 0 16 16"><rect x="1" y="0" width="5.500" height="5.500" rx="1" fill="#1667d9"/><rect x="9.500" y="0" width="5.500" height="5.500" rx="1" fill="#1667d9"/><rect x="1" y="7" width="5.500" height="9" rx="1" fill="#1667d9"/><rect x="9.500" y="7" width="5.500" height="9" rx="1" fill="#1667d9"/></svg>
  <svg class="abs" style="left:174px;top:6px" width="22" height="15" viewBox="0 0 22 15"><path d="M1 5l13-3 5 3-5 4-7 1z" fill="#d8681c"/><path d="M10 9l3 4 1-4z" fill="#9a4a16"/><path d="M19 3l2-2v4z" fill="#f5d33a"/></svg>
</div>
<svg id="sglogo" class="abs" style="left:1710px;top:829px" width="36" height="36" viewBox="0 0 36 36"><g transform="rotate(-9 18 18)"><rect x="3" y="3" width="30" height="30" rx="5" fill="#ea4a1f"/><text x="18" y="29" text-anchor="middle" font-family="Liberation Sans,sans-serif" font-weight="700" font-size="30" fill="#ffffff">S</text></g></svg>
<div id="wm" class="abs">www.java1234.com</div>
<div class="abs" style="left:1911px;top:934px;width:33px;height:62px;background:linear-gradient(180deg,#2f7fb0 0,#3bb879 25%,#42c06c 90%,#2f7fb0 100%);border-left:2px solid #2a6fb5"></div>
</div></div>
</body>
</html>
